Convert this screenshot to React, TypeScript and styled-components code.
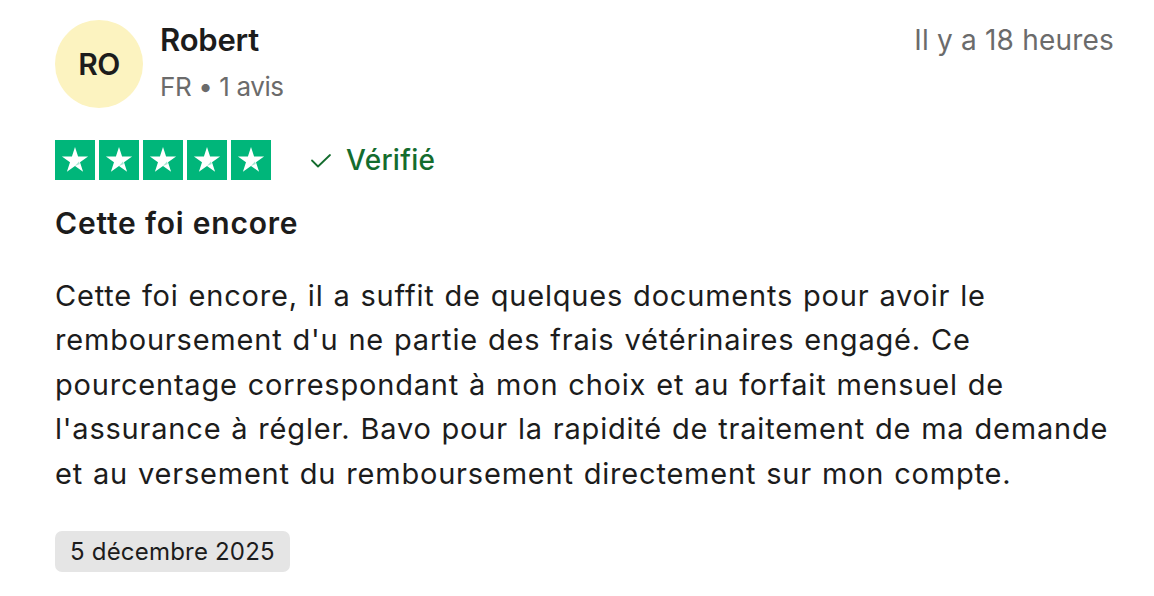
import React from "react";
import styled, { createGlobalStyle } from "styled-components";

const Global = createGlobalStyle`
  html, body { margin: 0; padding: 0; background: #ffffff; }
  body { font-family: Inter, "Noto Sans", sans-serif; color: #1c1c1c; }
`;

const Card = styled.article`
  width: 1154px;
  box-sizing: border-box;
  padding: 20px 40px 0 55px;
  display: flex;
  flex-direction: column;
`;

const Header = styled.header`
  display: flex;
  align-items: flex-start;
  justify-content: space-between;
`;

const Author = styled.div`
  display: flex;
  align-items: center;
  gap: 17px;
`;

const Avatar = styled.div`
  width: 88px;
  height: 88px;
  border-radius: 50%;
  background: #fcf3c0;
  display: flex;
  align-items: center;
  justify-content: center;
  font-size: 30px;
  font-weight: 600;
  color: #1c1c1c;
  letter-spacing: -0.5px;
`;

const AuthorInfo = styled.div`
  display: flex;
  flex-direction: column;
  gap: 11px;
  margin-top: -4px;
`;

const Name = styled.div`
  font-size: 31px;
  line-height: 38px;
  font-weight: 600;
  color: #1c1c1c;
  letter-spacing: -0.2px;
`;

const Meta = styled.div`
  font-size: 26px;
  line-height: 34px;
  color: #6b6b6b;
  letter-spacing: -0.4px;
`;

const Time = styled.time`
  margin-top: 3px;
  font-size: 28px;
  line-height: 34px;
  color: #6b6b6b;
  letter-spacing: 0.2px;
`;

const RatingRow = styled.div`
  display: flex;
  align-items: center;
  margin-top: 32px;
  gap: 38px;
`;

const Stars = styled.div`
  display: flex;
  gap: 4px;
`;

const StarBox = styled.div`
  width: 40px;
  height: 40px;
  background: #00b67a;
  display: flex;
  align-items: center;
  justify-content: center;
`;

const Verified = styled.div`
  display: flex;
  align-items: center;
  gap: 13px;
  color: #146c2e;
  font-size: 28px;
  font-weight: 500;
  letter-spacing: 0.3px;
`;

const Title = styled.h2`
  margin: 23px 0 0 0;
  font-size: 30px;
  line-height: 40px;
  font-weight: 600;
  color: #1c1c1c;
  letter-spacing: 0.8px;
`;

const Body = styled.p`
  margin: 31px 0 0 0;
  font-size: 29px;
  line-height: 44.4px;
  color: #1c1c1c;
  letter-spacing: 0.8px;
  word-spacing: 1px;
`;

const DateChip = styled.div`
  align-self: flex-start;
  margin-top: 35px;
  background: #e5e5e5;
  border-radius: 7px;
  padding: 0 15px;
  height: 41px;
  display: flex;
  align-items: center;
  font-size: 24px;
  color: #1c1c1c;
  letter-spacing: 0.2px;
`;

const Star = () => (
  <svg width="30" height="30" viewBox="0 0 24 24">
    <path
      d="M12 1.5l2.47 7.6h8l-6.47 4.7 2.47 7.6L12 16.7l-6.47 4.7 2.47-7.6L1.53 9.1h8z"
      fill="#ffffff"
    />
    <path d="M15.2 13.2l0.6 1.9L12 16.7z" fill="#00b67a" opacity="0.35" />
  </svg>
);

const Check = () => (
  <svg width="24" height="24" viewBox="0 0 24 24" fill="none">
    <path d="M3 12.5l6 6L21 7" stroke="#146c2e" strokeWidth="1.8" strokeLinecap="round" strokeLinejoin="round" />
  </svg>
);

export default function App() {
  return (
    <>
      <Global />
      <Card>
        <Header>
          <Author>
            <Avatar>RO</Avatar>
            <AuthorInfo>
              <Name>Robert</Name>
              <Meta>FR • 1 avis</Meta>
            </AuthorInfo>
          </Author>
          <Time>Il y a 18 heures</Time>
        </Header>
        <RatingRow>
          <Stars>
            {[0, 1, 2, 3, 4].map((i) => (
              <StarBox key={i}>
                <Star />
              </StarBox>
            ))}
          </Stars>
          <Verified>
            <Check />
            Vérifié
          </Verified>
        </RatingRow>
        <Title>Cette foi encore</Title>
        <Body>
          Cette foi encore, il a suffit de quelques documents pour avoir le remboursement d'u ne partie des frais
          vétérinaires engagé. Ce pourcentage correspondant à mon choix et au forfait mensuel de l'assurance à régler.
          Bavo pour la rapidité de traitement de ma demande et au versement du remboursement directement sur mon compte.
        </Body>
        <DateChip>5 décembre 2025</DateChip>
      </Card>
    </>
  );
}
